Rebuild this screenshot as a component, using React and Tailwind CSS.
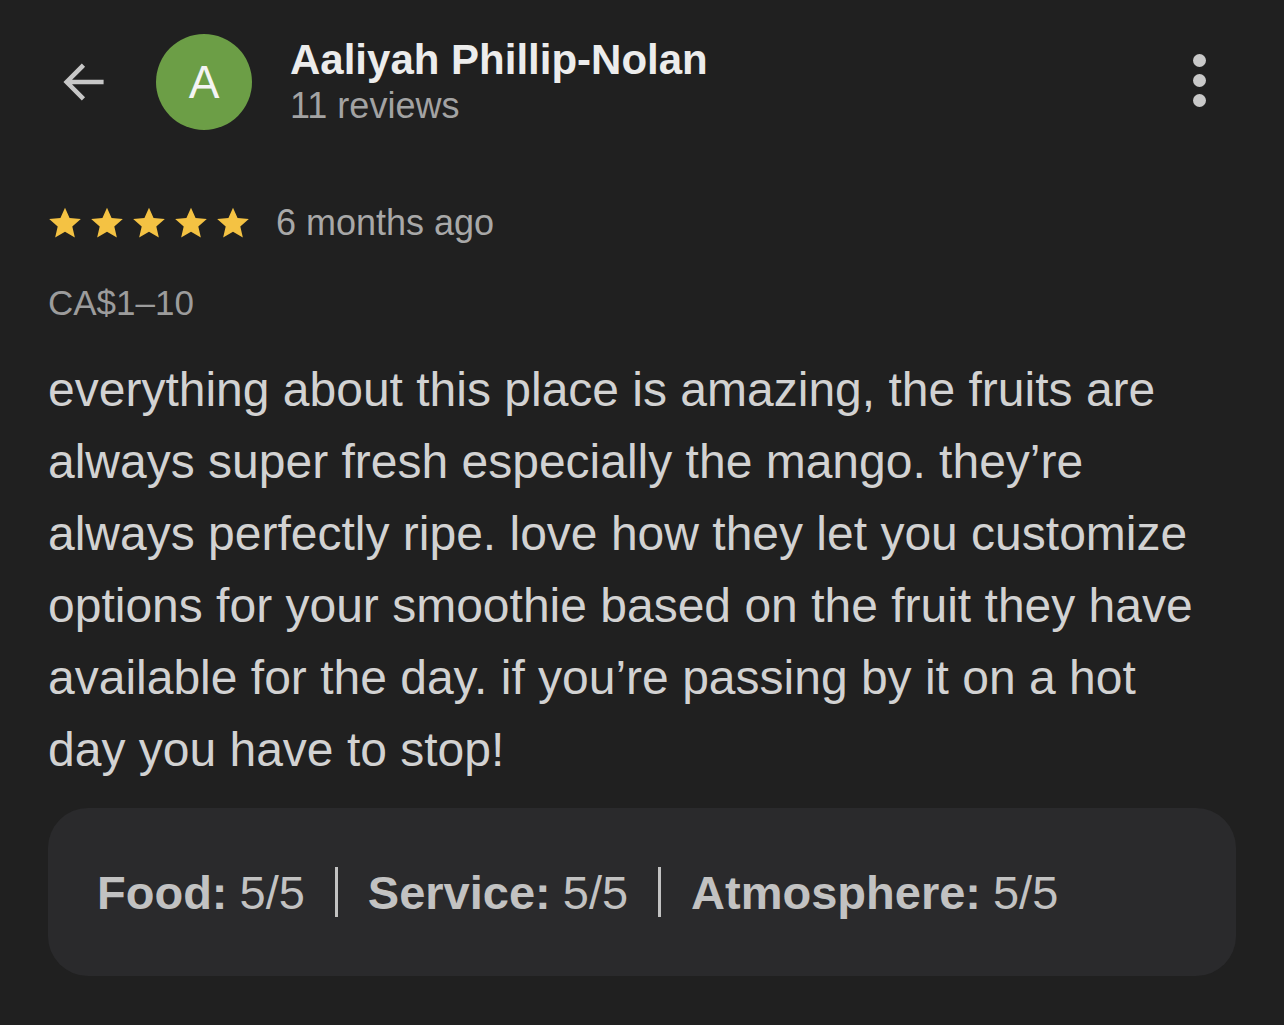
import React from "react";

function Star() {
  return (
    <svg width="38" height="36" viewBox="0 0 24 24" className="shrink-0">
      <path
        fill="#f4c243"
        d="M12 1.8l3.05 6.9 7.5.7-5.68 4.98 1.7 7.35L12 17.9l-6.57 3.83 1.7-7.35L1.45 9.4l7.5-.7z"
      />
    </svg>
  );
}

function App() {
  return (
    <div
      className="w-[1284px] h-[1025px] bg-[#202020] overflow-hidden"
      style={{ fontFamily: '"Liberation Sans", Arial, sans-serif' }}
    >
      <div className="flex items-center pl-[58px] pr-[78px] pt-[34px]">
        <svg width="52" height="52" viewBox="0 0 24 24" className="shrink-0">
          <path
            d="M20 12H4.5M11 5l-7 7 7 7"
            fill="none"
            stroke="#c7c7c7"
            strokeWidth="2.1"
            strokeLinecap="square"
          />
        </svg>
        <div className="ml-[46px] w-[96px] h-[96px] rounded-full bg-[#6c9e46] flex items-center justify-center text-[#f4f4f4] text-[46px] leading-none">
          A
        </div>
        <div className="ml-[38px] flex flex-col">
          <div className="text-[42px] font-bold text-[#ececec] leading-[48px]">
            Aaliyah Phillip-Nolan
          </div>
          <div className="text-[36px] text-[#a3a3a3] leading-[44px]">11 reviews</div>
        </div>
        <div className="ml-auto flex flex-col gap-[7px] -mt-[4px]">
          <span className="w-[13px] h-[13px] rounded-full bg-[#c9c9c9]" />
          <span className="w-[13px] h-[13px] rounded-full bg-[#c9c9c9]" />
          <span className="w-[13px] h-[13px] rounded-full bg-[#c9c9c9]" />
        </div>
      </div>

      <div className="px-[48px]">
        <div className="flex items-center mt-[75px]">
          <div className="flex gap-[4px] -ml-[2px]">
            <Star />
            <Star />
            <Star />
            <Star />
            <Star />
          </div>
          <span className="ml-[24px] text-[36px] text-[#a8a8a8] leading-none">6 months ago</span>
        </div>

        <div className="mt-[44px] text-[35px] text-[#9c9c9c] leading-none">CA$1–10</div>

        <p className="mt-[34px] pr-[38px] text-[48px] leading-[72px] text-[#d2d2d2]">
          everything about this place is amazing, the fruits are always super fresh especially the
          mango. they’re always perfectly ripe. love how they let you customize options for your
          smoothie based on the fruit they have available for the day. if you’re passing by it on a
          hot day you have to stop!
        </p>

        <div className="mt-[22px] h-[168px] rounded-[40px] bg-[#2a2a2c] flex items-center px-[49px] text-[47px] text-[#c2c2c2] leading-none">
          <span className="font-bold">Food:</span>
          <span className="ml-[12px]">5/5</span>
          <span className="mx-[30px] w-[3px] h-[50px] bg-[#c2c2c2]" />
          <span className="font-bold">Service:</span>
          <span className="ml-[12px]">5/5</span>
          <span className="mx-[30px] w-[3px] h-[50px] bg-[#c2c2c2]" />
          <span className="font-bold">Atmosphere:</span>
          <span className="ml-[12px]">5/5</span>
        </div>
      </div>
    </div>
  );
}

export default App;
